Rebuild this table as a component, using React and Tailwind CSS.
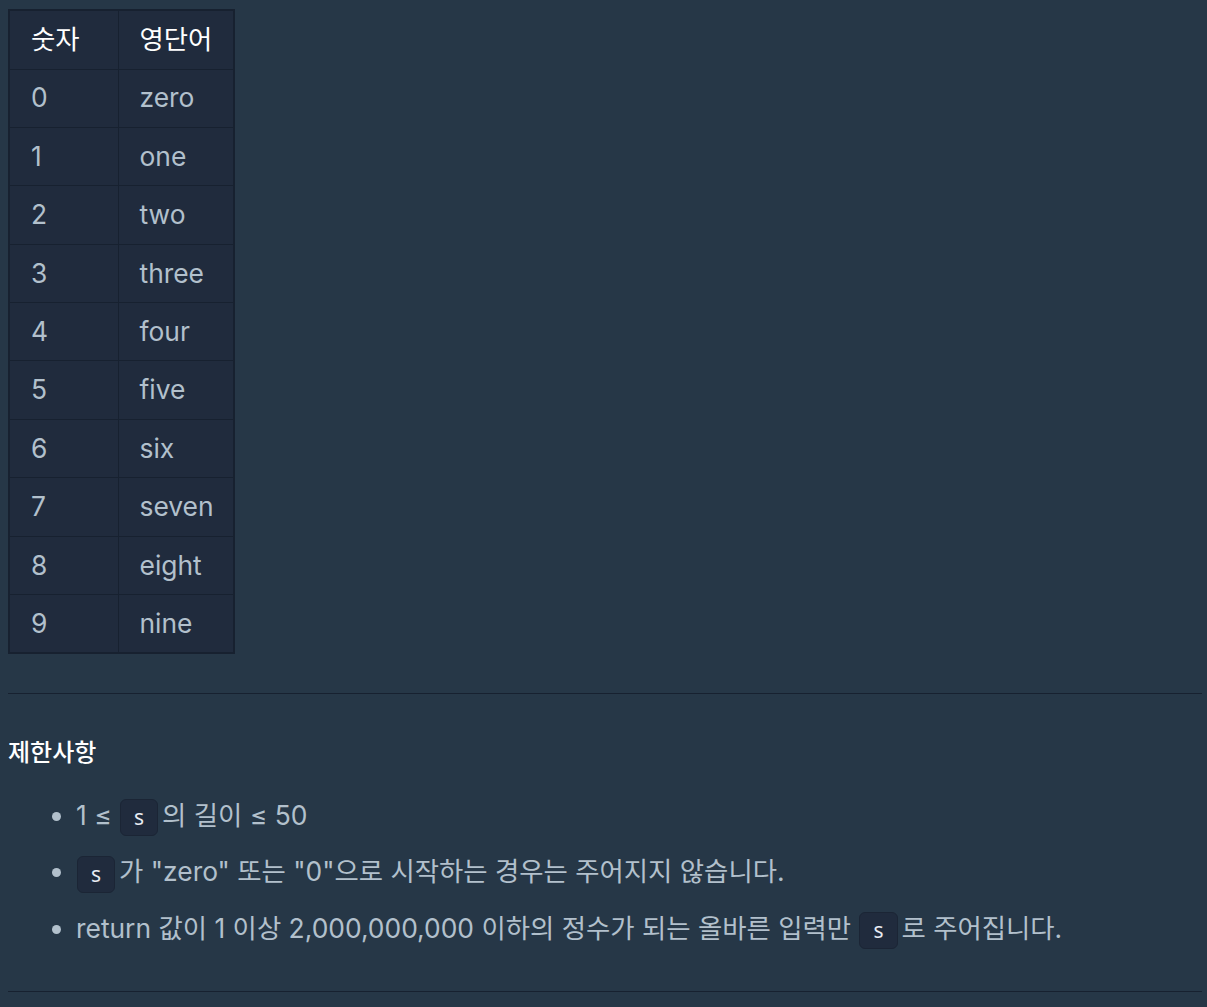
import React from "react"

const rows = [
  ["0", "zero"],
  ["1", "one"],
  ["2", "two"],
  ["3", "three"],
  ["4", "four"],
  ["5", "five"],
  ["6", "six"],
  ["7", "seven"],
  ["8", "eight"],
  ["9", "nine"],
]

function Code({ children }) {
  return (
    <code className="inline-block ml-[1px] mr-[4px] px-[13px] h-[37px] leading-[35px] align-middle rounded-[6px] bg-[#202b3d] border border-[#1b2535] text-[#e9ecf3] text-[21px] font-['Noto_Sans',sans-serif]">
      {children}
    </code>
  )
}

export default function App() {
  return (
    <div
      className="min-h-[1007px] bg-[#263747] pl-[8px] pr-[5px] pt-[9px] text-[26.4px] text-[#b2c0cc]"
      style={{ fontFamily: 'Inter, "Noto Sans CJK KR", sans-serif' }}
    >
      <table className="table-fixed w-[225px] border-collapse border-2 border-[#172130] bg-[#202b3d]">
        <thead>
          <tr>
            <th className="w-[109px] h-[59px] border border-[#172130] pl-[21px] pr-0 text-left font-normal text-white">숫자</th>
            <th className="w-[116px] h-[59px] border border-[#172130] pl-[21px] pr-0 text-left font-normal text-white whitespace-nowrap">영단어</th>
          </tr>
        </thead>
        <tbody>
          {rows.map(([n, w]) => (
            <tr key={n}>
              <td className="h-[58.4px] border border-[#172130] pl-[21px]">{n}</td>
              <td className="h-[58.4px] border border-[#172130] pl-[21px]">{w}</td>
            </tr>
          ))}
        </tbody>
      </table>

      <hr className="mt-[39px] border-0 border-t border-[#172130]" />

      <h5 className="mt-[41px] text-[24px] font-medium text-white leading-[36px]">제한사항</h5>

      <ul className="mt-[25px] pl-[68px] list-disc marker:text-[#b2c0cc]">
        <li className="h-[38px] leading-[38px] mb-[18.5px]">
          1 ≤ <Code>s</Code>의 길이 ≤ 50
        </li>
        <li className="h-[38px] leading-[38px] mb-[18.5px]">
          <Code>s</Code>가 "zero" 또는 "0"으로 시작하는 경우는 주어지지 않습니다.
        </li>
        <li className="h-[38px] leading-[38px]">
          return 값이 1 이상 2,000,000,000 이하의 정수가 되는 올바른 입력만 <Code>s</Code>로 주어집니다.
        </li>
      </ul>

      <hr className="mt-[44px] border-0 border-t border-[#172130]" />
    </div>
  )
}
